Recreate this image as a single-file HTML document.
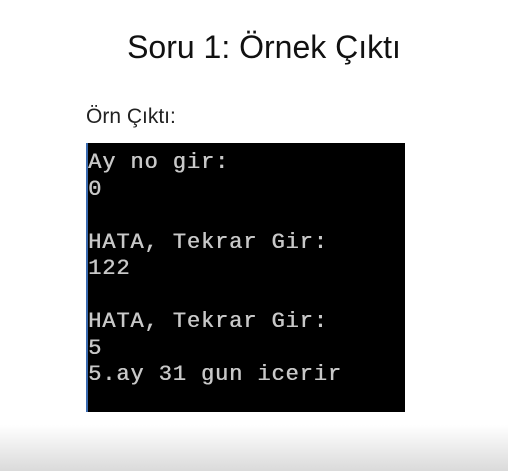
<!DOCTYPE html>
<html><head><style>
body{margin:0;width:508px;height:471px;overflow:hidden;background:#fff;position:relative;font-family:"Liberation Sans",sans-serif}
.t{position:absolute;left:10px;width:508px;top:29px;text-align:center;font-size:32px;color:#111}
.s{position:absolute;left:86px;top:105px;font-size:21px;color:#222}
.c{position:absolute;left:86px;top:143px;width:319px;height:269px;background:#000;border-left:2px solid #3a6ab0;box-sizing:border-box}
.c pre{margin:0;position:absolute;left:0;top:7px;font-family:"Liberation Mono",monospace;font-size:22px;line-height:26.5px;letter-spacing:0.9px;color:#c8c8c8;text-shadow:0.5px 0 0 #c8c8c8}
.g{position:absolute;left:0;top:425px;width:508px;height:46px;background:linear-gradient(#fff,#dadada)}
</style></head><body>
<div class="t">Soru 1: Örnek Çıktı</div>
<div class="s">Örn Çıktı:</div>
<div class="c"><pre>Ay no gir:
0

HATA, Tekrar Gir:
122

HATA, Tekrar Gir:
5
5.ay 31 gun icerir</pre></div>
<div class="g"></div>
</body></html>
